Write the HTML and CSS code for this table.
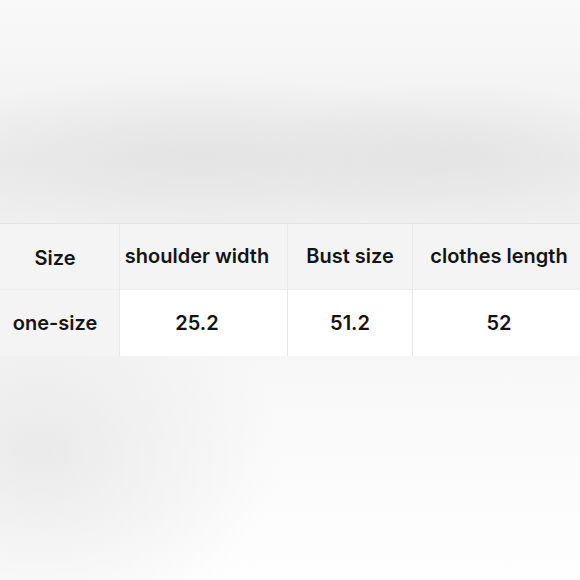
FILE: index.html
```html
<!DOCTYPE html>
<html>
<head>
<meta charset="utf-8">
<link rel="stylesheet" href="styles.css">
</head>
<body>
<div class="page">
  <div class="spacer"></div>
  <div class="table">
    <div class="cell head c1">Size</div>
    <div class="cell head c2">shoulder width</div>
    <div class="cell head c3">Bust size</div>
    <div class="cell head c4">clothes length</div>
    <div class="cell c1">one-size</div>
    <div class="cell val c2">25.2</div>
    <div class="cell val c3">51.2</div>
    <div class="cell val c4">52</div>
  </div>
</div>
</body>
</html>
```
FILE: styles.css
```css
html, body {
  margin: 0;
  padding: 0;
}
body {
  width: 580px;
  height: 580px;
  overflow: hidden;
  font-family: Inter, "Liberation Sans", Arial, sans-serif;
  background:
    radial-gradient(ellipse 240px 190px at 40px 450px, rgba(230,230,230,0.8), rgba(236,236,236,0) 100%),
    radial-gradient(ellipse 300px 80px at 200px 155px, rgba(226,226,226,0.85), rgba(230,230,230,0) 100%),
    radial-gradient(ellipse 200px 75px at 450px 155px, rgba(226,226,226,0.8), rgba(230,230,230,0) 100%),
    linear-gradient(to bottom, #f9f9f9 0px, #f3f3f3 100px, #ececec 160px, #efefef 220px, #f8f8f8 370px, #fbfbfb 470px, #fefefe 580px);
}
.page {
  display: flex;
  flex-direction: column;
  height: 580px;
}
.spacer {
  height: 223px;
  flex: none;
}
.table {
  display: grid;
  grid-template-columns: 120px 168px 125px 167px;
  grid-template-rows: 66px 66px;
  border-top: 1px solid #e4e4e4;
}
.cell {
  display: flex;
  align-items: center;
  justify-content: center;
  font-size: 20px;
  font-weight: 600;
  color: #141414;
  background: #ffffff;
  border-right: 1px solid #e8e8e8;
  border-bottom: 1px solid #ededed;
  box-sizing: border-box;
}
.head {
  background: #f4f4f4;
  padding-bottom: 2px;
}
.c1 {
  background: #f4f4f4;
  padding-right: 9px;
}
.c1.head {
  padding-bottom: 0;
  padding-top: 2px;
}
.c2 {
  padding-right: 13px;
}
.c4 {
  padding-left: 5px;
  border-right: none;
}
.cell:nth-child(n+5) {
  border-bottom: none;
}
```
